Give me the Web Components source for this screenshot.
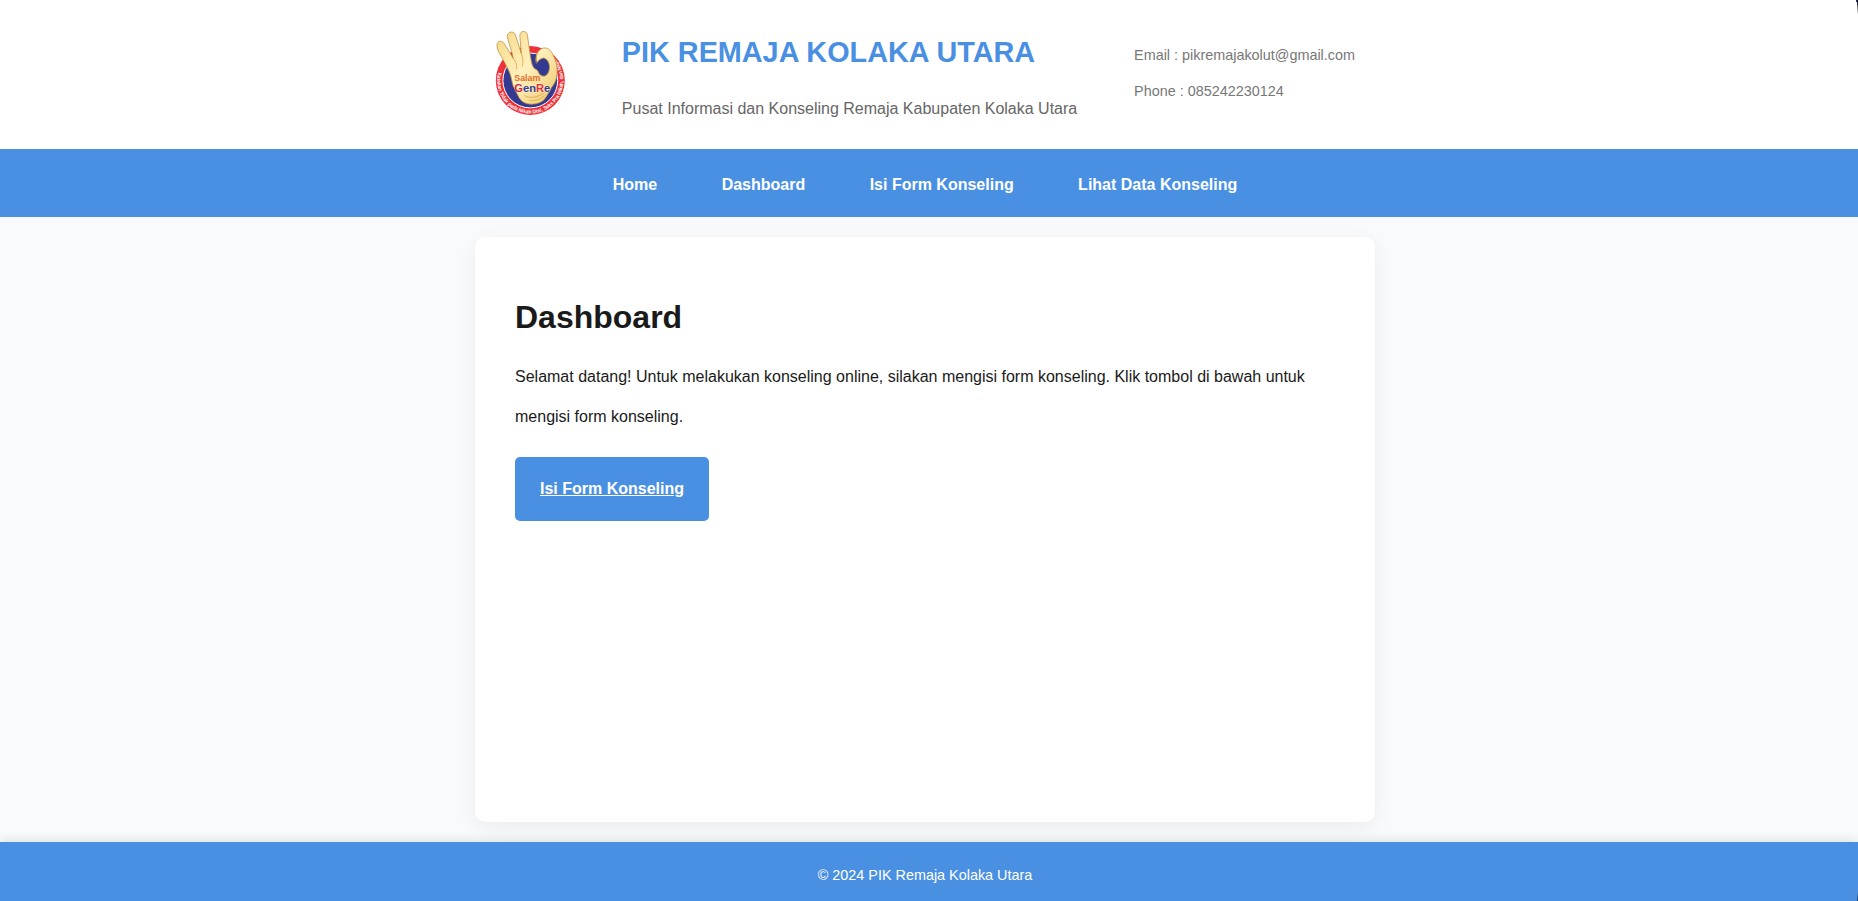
<!DOCTYPE html>
<html lang="id">
<head>
<meta charset="utf-8">
<title>PIK Remaja Kolaka Utara</title>
<style>
html,body{margin:0;height:100%}
body{font-family:"Liberation Sans",Arial,sans-serif;font-size:16px;line-height:2.5;color:#1a1a1a;background:#f9fafc;overflow:hidden}
</style>
</head>
<body>
<pik-app></pik-app>
<script>
function define(name, html){
  const t=document.createElement('template');
  t.innerHTML=html;
  customElements.define(name,class extends HTMLElement{
    constructor(){super();this.attachShadow({mode:'open'}).append(t.content.cloneNode(true));}
  });
}
define('genre-logo',`<style>:host{display:block;width:70px;height:90px}svg{display:block;overflow:visible}text{font-family:"Liberation Sans",Arial,sans-serif;font-weight:bold;line-height:1}</style>
<svg width="70" height="90" viewBox="495.7 30.5 70 90">
<circle cx="531" cy="81" r="34.5" fill="#ee3038"/>
<circle cx="531" cy="81" r="27.4" fill="#343a91" stroke="#fff" stroke-width="1"/>
<defs><linearGradient id="skin" x1="0" x2="1" y1="0" y2="1"><stop offset="0" stop-color="#f5d98a"/><stop offset=".5" stop-color="#fff0bd"/><stop offset="1" stop-color="#efc568"/></linearGradient>
<path id="arc" d="M499 73A33 33 0 1 0 553 56.4"/></defs>
<text font-size="5.2" fill="#fff"><textPath href="#arc" textLength="137" lengthAdjust="spacingAndGlyphs">Katakan Tidak pada Nikah Dini, Seks Pra Nikah, dan Napza</textPath></text>
<path d="M512 79C511 73 507 66 502 57C499 52 497 48 498 44C499 41 503 41 505 44L514 59C513 52 509 43 508 37C508 32 514 31 516 35L522 54L520.500 36C520.500 31 527 30.500 528 35L531 56C532 62 533 69 537 70C540 72 539 75 542 76C546 78 549 75 550 70C551 64 548 59 544 58.500C541 59 539 61 538 63C535 58 538 50 544 48.500C549 48 552 51 554 56C559 65 559 77 555 84C551 89 549 95 545 100C540 105 528 107 522 101C518 97 517 91 514 87Z" fill="url(#skin)" stroke="#c0923e" stroke-width=".8" stroke-linejoin="round"/>
<path d="M514 59C517 63 518 66 517 70M522 54C524 59 524 63 523 67M539 52C537 56 536 60 537 64M525 96C531 100 541 97 546 92M530 101C536 102 542 99 545 96" fill="none" stroke="#d8a64a" stroke-width=".8"/>
<text x="515" y="81" font-size="8.2" textLength="26" lengthAdjust="spacingAndGlyphs" fill="#e06f2c">Salam</text>
<text x="515" y="92.5" font-size="11" textLength="36" lengthAdjust="spacingAndGlyphs" stroke="#fff" stroke-opacity=".6" stroke-width=".8" paint-order="stroke"><tspan fill="#ca2940">G</tspan><tspan fill="#343a91">en</tspan><tspan fill="#e7303a">R</tspan><tspan fill="#343a91">e</tspan></text>
</svg>`);
define('pik-header',`<style>:host{display:block;height:149px;background:#fff}
.in{display:flex;justify-content:space-between;width:860px;height:149px;margin:0 auto;align-items:center}
.t{padding-bottom:4px}
h1{margin:0;font-size:28.8px;line-height:72px;padding-bottom:1px;color:#4a90e2}
p{margin:0;color:#666;line-height:40px}
.c{padding-bottom:4px}
.c p{font-size:14.4px;line-height:36px;color:#777}</style>
<div class="in"><genre-logo></genre-logo><div class="t"><h1>PIK REMAJA KOLAKA UTARA</h1><p>Pusat Informasi dan Konseling Remaja Kabupaten Kolaka Utara</p></div><div class="c"><p>Email : pikremajakolut@gmail.com</p><p>Phone : 085242230124</p></div></div>`);
define('pik-nav',`<style>:host{display:flex;box-sizing:border-box;justify-content:center;gap:64.45px;height:68px;align-items:center;padding-top:3px;background:#4a90e2}</style><slot></slot>`);
define('nav-item',`<style>:host{display:block;color:#fff;font-weight:bold;line-height:40px}</style><slot></slot>`);
define('pik-card',`<style>:host{display:block;box-sizing:border-box;width:900px;height:585px;margin:20px auto;padding:40px;background:#fff;border-radius:10px;box-shadow:0 5px 20px rgba(0,0,0,.06)}
h1{margin:0;font-size:32px;line-height:80px}p{margin:0 0 20px}</style><h1><slot name="title"></slot></h1><p><slot></slot></p><slot name="action"></slot>`);
define('pik-button',`<style>:host{display:inline-block}a{display:block;padding:12px 25px;background:#4a90e2;border-radius:5px;color:#fff;font-weight:bold;text-decoration:underline;line-height:40px}</style><a><slot></slot></a>`);
define('pik-footer',`<style>:host{display:block;height:59px;background:#4a90e2;box-shadow:0 -2px 10px rgba(0,0,0,.1);text-align:center;color:#fff;font-size:14.4px;line-height:66px;position:relative}</style><slot></slot>`);
define('pik-app',`<style>:host{display:block;height:901px;position:relative}
pik-header,pik-nav,main,pik-footer{padding-right:8px}
.edge{position:absolute;right:0;width:1px}
.top{top:0;height:15px;background:linear-gradient(#10122b 20%,#777 45%,#fff)}
.top::before{content:"";position:absolute;right:1px;top:0;width:1px;height:2px;background:#33345c}
.bottom{bottom:0;height:9px;background:linear-gradient(#4a90e2,#1d3d66)}</style>
<pik-header></pik-header>
<pik-nav><nav-item>Home</nav-item><nav-item>Dashboard</nav-item><nav-item>Isi Form Konseling</nav-item><nav-item>Lihat Data Konseling</nav-item></pik-nav>
<main><pik-card><span slot="title">Dashboard</span>Selamat datang! Untuk melakukan konseling online, silakan mengisi form konseling. Klik tombol di bawah untuk mengisi form konseling.<pik-button slot="action">Isi Form Konseling</pik-button></pik-card></main>
<pik-footer>© 2024 PIK Remaja Kolaka Utara</pik-footer>
<div class="edge top"></div><div class="edge bottom"></div>`);
</script>
</body>
</html>
